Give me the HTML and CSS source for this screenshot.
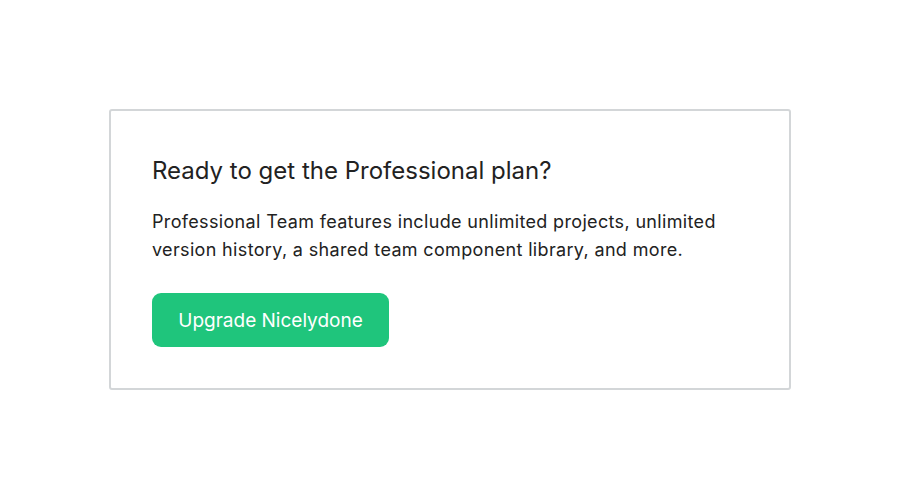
FILE: index.html
```html
<!DOCTYPE html>
<html lang="en">
<head>
    <meta charset="UTF-8">
    <meta name="viewport" content="width=device-width, initial-scale=1.0">
    <title>Upgrade</title>
    <link rel="stylesheet" href="styles.css">
</head>
<body>
    <div class="card">
        <h2 class="title">Ready to get the Professional plan?</h2>
        <p class="text">Professional Team features include unlimited projects, unlimited version history, a shared team component library, and more.</p>
        <button class="btn">Upgrade Nicelydone</button>
    </div>
</body>
</html>
```

FILE: styles.css
```css
body {
    font-family: 'Inter', sans-serif;
    margin: 0;
    background: #ffffff;
    color: #222222;
    padding: 109px 0 0 109px;
}

.card {
    width: 596px;
    border: 2px solid #d3d6d8;
    border-radius: 3px;
    padding: 44px 41px 41px 41px;
}

.title {
    font-size: 24px;
    font-weight: 400;
    margin: 0 0 22px;
    line-height: 32px;
}

.text {
    font-size: 18px;
    line-height: 28px;
    letter-spacing: 0.34px;
    margin: -1px 0 29px;
}

.btn {
    font-family: 'Inter', sans-serif;
    font-size: 19px;
    background-color: #1fc57c;
    color: #ffffff;
    border: none;
    border-radius: 9px;
    width: 237px;
    height: 54px;
    cursor: pointer;
}
```
